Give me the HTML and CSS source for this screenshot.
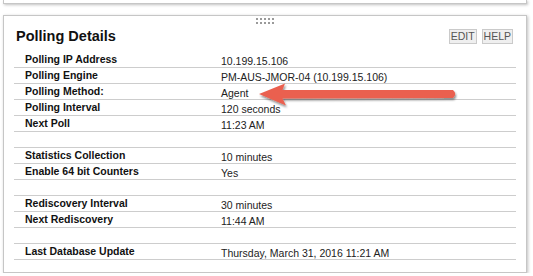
FILE: index.html
```html
<!DOCTYPE html>
<html>
<head>
    <title>Polling Details</title>
    <link rel="stylesheet" href="styles.css">
</head>
<body>
    <div class="panel panel-top"></div>

    <div class="panel">
        <div class="grip">
            <svg width="18" height="6" viewBox="0 0 18 6">
                <g fill="#9a9a9a">
                    <rect x="0" y="0" width="2" height="2"/><rect x="4" y="0" width="2" height="2"/>
                    <rect x="8" y="0" width="2" height="2"/><rect x="12" y="0" width="2" height="2"/>
                    <rect x="16" y="0" width="2" height="2"/>
                    <rect x="0" y="4" width="2" height="2"/><rect x="4" y="4" width="2" height="2"/>
                    <rect x="8" y="4" width="2" height="2"/><rect x="12" y="4" width="2" height="2"/>
                    <rect x="16" y="4" width="2" height="2"/>
                </g>
            </svg>
        </div>

        <div class="header">
            <h1>Polling Details</h1>
            <div class="actions">
                <button class="btn">EDIT</button>
                <button class="btn">HELP</button>
            </div>
        </div>

        <div class="details">
            <div class="row"><span class="label">Polling IP Address</span><span class="value">10.199.15.106</span></div>
            <div class="row"><span class="label">Polling Engine</span><span class="value">PM-AUS-JMOR-04 (10.199.15.106)</span></div>
            <div class="row"><span class="label">Polling Method:</span><span class="value">Agent</span></div>
            <div class="row"><span class="label">Polling Interval</span><span class="value">120 seconds</span></div>
            <div class="row"><span class="label">Next Poll</span><span class="value">11:23 AM</span></div>
            <div class="row"></div>
            <div class="row"><span class="label">Statistics Collection</span><span class="value">10 minutes</span></div>
            <div class="row"><span class="label">Enable 64 bit Counters</span><span class="value">Yes</span></div>
            <div class="row"></div>
            <div class="row"><span class="label">Rediscovery Interval</span><span class="value">30 minutes</span></div>
            <div class="row"><span class="label">Next Rediscovery</span><span class="value">11:44 AM</span></div>
            <div class="row"></div>
            <div class="row"><span class="label">Last Database Update</span><span class="value">Thursday, March 31, 2016 11:21 AM</span></div>
        </div>

        <!-- annotation arrow -->
        <svg class="arrow" width="206" height="32" viewBox="0 0 206 32">
            <defs>
                <filter id="shadow" x="-10%" y="-40%" width="120%" height="180%">
                    <feDropShadow dx="1" dy="2" stdDeviation="1.2" flood-color="#000" flood-opacity="0.45"/>
                </filter>
            </defs>
            <path d="M3 14 L29 3.5 L26.5 10 L197 10 Q201.5 14 197 18 L26.5 18.5 L30 25.5 Z" fill="#ea6150" filter="url(#shadow)"/>
        </svg>
    </div>
</body>
</html>
```

FILE: styles.css
```css
body {
    margin: 0;
    background-color: #fff;
    font-family: "Liberation Sans", Arial, Helvetica, sans-serif;
}

.panel {
    position: relative;
    margin: 0 6px 0 3px;
    border: 1px solid #c6c6c6;
    box-shadow: 1px 1px 3px rgba(0, 0, 0, 0.25);
    background-color: #fff;
    padding: 0 10px 12px;
}

.panel-top {
    border-top: none;
    height: 3px;
    padding: 0;
    margin-bottom: 11px;
}

.grip {
    display: flex;
    justify-content: center;
    margin-top: 2px;
    height: 6px;
}

.grip svg {
    display: block;
}

.header {
    display: flex;
    justify-content: space-between;
    align-items: flex-start;
    margin: 5px 3px 8px 2px;
}

h1 {
    margin: 0;
    font-size: 14.5px;
    line-height: 15px;
    font-weight: bold;
    color: #111;
}

.actions {
    display: flex;
    gap: 5px;
}

.btn {
    font-family: inherit;
    font-size: 10.5px;
    line-height: 13px;
    height: 15px;
    padding: 0 1px;
    border: 1px solid #cacaca;
    background-color: #efefef;
    color: #555;
}

.row {
    display: flex;
    height: 15px;
    border-bottom: 1px solid #cdcdcd;
    padding-left: 11px;
    font-size: 10.5px;
}

.label {
    width: 196px;
    font-weight: bold;
    line-height: 15px;
    color: #111;
}

.value {
    padding-top: 3px;
    line-height: 12px;
    color: #222;
}

.arrow {
    position: absolute;
    left: 252px;
    top: 64px;
}
```
